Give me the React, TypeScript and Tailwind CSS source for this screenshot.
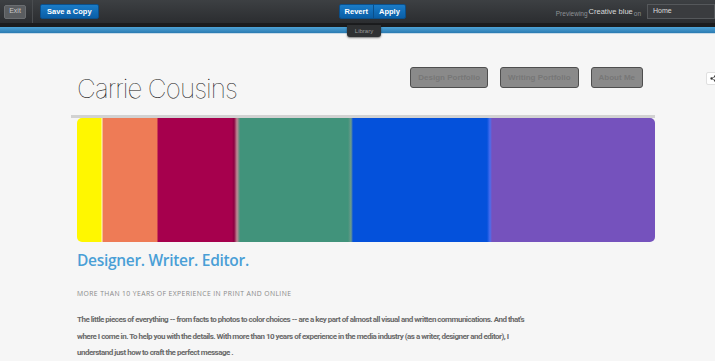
import React from "react";

export default function App() {
  return (
    <div className="relative w-[715px] h-[361px] overflow-hidden bg-[#f6f6f6] font-['Liberation_Sans',Arial,sans-serif]">
      {/* top toolbar */}
      <div className="h-[23px] bg-[linear-gradient(#3d4043,#2b2d30)] flex items-center text-[8px]">
        <div className="flex items-center h-full border-r border-[#4a4d50] pl-[4px] pr-[6px]">
          <div className="h-[14px] w-[22px] bg-[#5a5d60] border border-[#6b6e71] rounded-[2px] flex items-center justify-center text-[#c8c8c8] text-[7px]">
            Exit
          </div>
        </div>
        <div className="ml-[7px] h-[15px] px-[6px] rounded-[2px] bg-[linear-gradient(#1a7cc8,#0a5ea6)] border border-[#0b4f8a] flex items-center text-white font-bold text-[7.5px]">
          Save a Copy
        </div>
        <div className="ml-[240px] flex h-[15px] rounded-[2px] border border-[#0b4f8a] overflow-hidden text-white font-bold text-[7.5px]">
          <div className="px-[5px] flex items-center bg-[linear-gradient(#1a7cc8,#0a5ea6)] border-r border-[#0b4f8a]">Revert</div>
          <div className="px-[5px] flex items-center bg-[linear-gradient(#1a7cc8,#0a5ea6)]">Apply</div>
        </div>
        <div className="ml-auto flex items-end text-[#8e9296] text-[6.5px] mr-[6px] pt-[2px]">
          <span>Previewing</span>
          <span className="text-[#d8d8d8] text-[7.5px] mb-[2px] mx-[1px]">Creative blue</span>
          <span>on</span>
        </div>
        <div className="h-[15px] w-[68px] bg-[#3a3c3f] border border-[#55585b] flex items-center pl-[5px] text-[#dcdcdc] text-[7px]">
          Home
        </div>
      </div>
      <div className="h-[4px] bg-[#1b1c1e]" />
      <div className="h-[7px] bg-[linear-gradient(#4da2d6,#2b7bb2)] border-b border-[#c9dbe8]" />
      {/* library tab */}
      <div className="absolute left-[347px] top-[25px] h-[12px] w-[34px] bg-[#2f3133] rounded-b-[3px] shadow-[0_1px_2px_rgba(0,0,0,0.5)] flex items-center justify-center text-[#9a9a9a] text-[6px]">
        Library
      </div>
      {/* side share tab */}
      <div className="absolute left-[706px] top-[72px] h-[13px] w-[14px] bg-white border border-[#e0e0e0] rounded-[2px] flex items-center pl-[3px]">
        <svg width="7" height="7" viewBox="0 0 8 8">
          <circle cx="6" cy="1.5" r="1.3" fill="#333" />
          <circle cx="1.7" cy="4" r="1.3" fill="#333" />
          <circle cx="6" cy="6.5" r="1.3" fill="#333" />
          <path d="M6 1.5 L1.7 4 L6 6.5" stroke="#333" strokeWidth="0.8" fill="none" />
        </svg>
      </div>

      {/* header row */}
      <div className="flex justify-between items-start pl-[77px] pr-[72px] pt-[33px]">
        <div className="mt-[6px] font-['Inter',sans-serif] font-thin text-[26px] leading-[32px] tracking-[-0.9px] text-[#111]">
          Carrie Cousins
        </div>
        <div className="flex gap-[12px]">
          {["Design Portfolio", "Writing Portfolio", "About Me"].map((t) => (
            <div
              key={t}
              className="h-[21px] px-[7px] flex items-center bg-[#8a8a8a] border border-[#4e4e4e] rounded-[3px] text-[#777] font-bold text-[8px] font-['Liberation_Sans',Arial,sans-serif]"
            >
              {t}
            </div>
          ))}
        </div>
      </div>

      {/* rule */}
      <div className="ml-[71px] mr-[60px] mt-[10px] h-[3px] bg-[#d2d2d2]" />

      {/* colour bar */}
      <div className="ml-[77px] w-[578px] h-[124px] rounded-[5px] bg-[linear-gradient(to_right,#fff700_0px_24px,#fffbd0_25px,#ee7b56_26px_80px,#a6004d_81px_155px,#8a0040_157px,#c08a95_160px,#41937b_163px_271px,#6e9a8a_274px,#0451db_276px_410px,#4a6ef0_413px,#7552bd_415px)]" />

      <div className="pl-[77px] pr-[60px]">
        <div className="mt-[7px] font-['Open_Sans',sans-serif] font-semibold text-[15.5px] leading-[22px] text-[#4a9fd6] tracking-[-0.3px]">
          Designer. Writer. Editor.
        </div>
        <div className="mt-[18px] font-['Open_Sans',sans-serif] text-[6.8px] tracking-[0.4px] text-[#8a8a8a] uppercase">
          MORE THAN 10 YEARS OF EXPERIENCE IN PRINT AND ONLINE
        </div>
        <div className="mt-[13px] font-['Roboto',sans-serif] font-bold text-[8px] leading-[16.5px] tracking-[-0.5px] text-[#6a6a6a]">
          The little pieces of everything -- from facts to photos to color choices -- are a key part of almost all visual and written communications. And that's
          <br />
          where I come in. To help you with the details. With more than 10 years of experience in the media industry (as a writer, designer and editor), I
          <br />
          understand just how to craft the perfect message .
        </div>
      </div>
    </div>
  );
}
